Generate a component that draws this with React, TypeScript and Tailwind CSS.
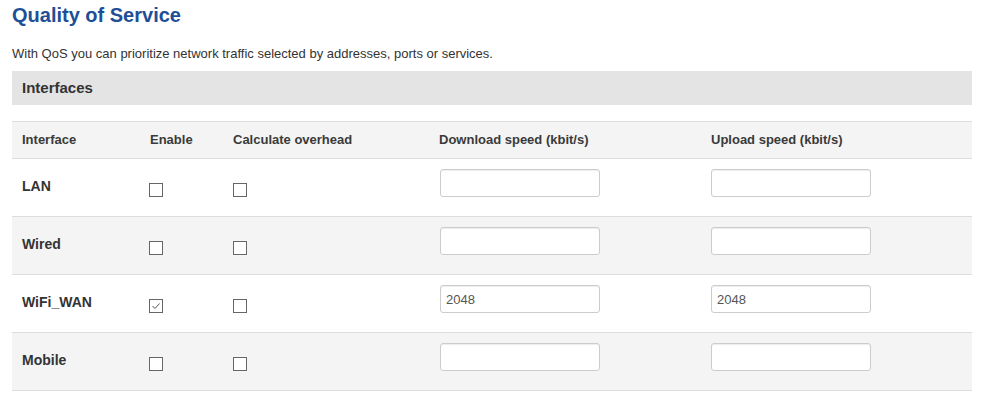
import { useState } from "react";

type Row = {
  name: string;
  enabled: boolean;
  overhead: boolean;
  down: string;
  up: string;
};

const initialRows: Row[] = [
  { name: "LAN", enabled: false, overhead: false, down: "", up: "" },
  { name: "Wired", enabled: false, overhead: false, down: "", up: "" },
  { name: "WiFi_WAN", enabled: true, overhead: false, down: "2048", up: "2048" },
  { name: "Mobile", enabled: false, overhead: false, down: "", up: "" },
];

function Checkbox({ checked, onChange }: { checked: boolean; onChange: () => void }) {
  return (
    <button
      type="button"
      onClick={onChange}
      className="w-[14px] h-[14px] border border-[#666] bg-white flex items-center justify-center p-0"
    >
      {checked && (
        <svg width="12" height="12" viewBox="0 0 12 12" fill="none">
          <path d="M2.5 6 L5 8.5 L9.5 3.5" stroke="#555" strokeWidth="1" />
        </svg>
      )}
    </button>
  );
}

function SpeedInput({ value, onChange }: { value: string; onChange: (v: string) => void }) {
  return (
    <input
      type="text"
      value={value}
      onChange={(e) => onChange(e.target.value)}
      className="w-[160px] h-[28px] border border-[#cccccc] rounded-[3px] bg-white pl-[5px] text-[13px] text-[#555] outline-none shadow-[inset_0_1px_1px_rgba(0,0,0,0.075)]"
    />
  );
}

export default function App() {
  const [rows, setRows] = useState(initialRows);

  const update = (i: number, patch: Partial<Row>) =>
    setRows((r) => r.map((row, j) => (j === i ? { ...row, ...patch } : row)));

  return (
    <div className="w-[981px] h-[397px] bg-white font-['Liberation_Sans',Arial,sans-serif] text-[#333]">
      <div className="w-[960px] ml-[12px] pt-[4px]">
        <h1 className="text-[20px] leading-[23px] font-bold text-[#1e4f96]">Quality of Service</h1>
        <p className="mt-[19px] text-[13px] leading-[15px] text-[#333]">
          With QoS you can prioritize network traffic selected by addresses, ports or services.
        </p>

        <div className="mt-[10px] h-[34px] bg-[#e4e4e4] flex items-center pl-[10px] pt-[1px]">
          <h2 className="text-[15px] font-bold text-[#333]">Interfaces</h2>
        </div>

        <div className="mt-[16px] border-t border-[#dddddd]">
          <div className="grid grid-cols-[128px_83px_206px_272px_1fr] h-[37px] items-center bg-[#f4f4f4] border-b border-[#dddddd] text-[13px] font-bold text-[#3a3a3a]">
            <div className="pl-[10px]">Interface</div>
            <div className="pl-[10px]">Enable</div>
            <div className="pl-[10px]">Calculate overhead</div>
            <div className="pl-[10px]">Download speed (kbit/s)</div>
            <div className="pl-[10px]">Upload speed (kbit/s)</div>
          </div>

          {rows.map((row, i) => (
            <div
              key={row.name}
              className={`grid grid-cols-[128px_83px_206px_272px_1fr] h-[58px] items-start border-b border-[#dddddd] ${
                i % 2 === 1 ? "bg-[#f4f4f4]" : "bg-white"
              }`}
            >
              <div className="pl-[10px] pt-[17px] text-[14px] leading-[20px] font-bold text-[#333]">
                {row.name}
              </div>
              <div className="pl-[9px] pt-[24px]">
                <Checkbox checked={row.enabled} onChange={() => update(i, { enabled: !row.enabled })} />
              </div>
              <div className="pl-[10px] pt-[24px]">
                <Checkbox checked={row.overhead} onChange={() => update(i, { overhead: !row.overhead })} />
              </div>
              <div className="pl-[11px] pt-[10px]">
                <SpeedInput value={row.down} onChange={(v) => update(i, { down: v })} />
              </div>
              <div className="pl-[10px] pt-[10px]">
                <SpeedInput value={row.up} onChange={(v) => update(i, { up: v })} />
              </div>
            </div>
          ))}
        </div>
      </div>
    </div>
  );
}
